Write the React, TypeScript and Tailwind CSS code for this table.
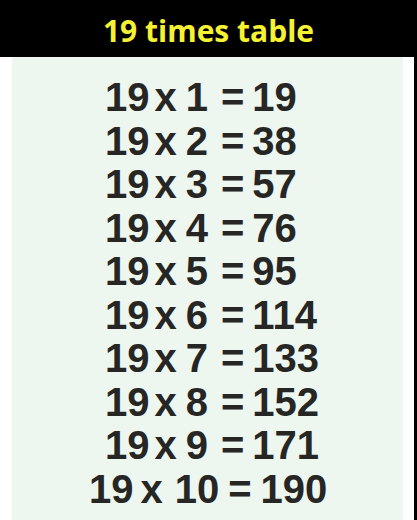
const rows = [1, 2, 3, 4, 5, 6, 7, 8, 9];

export default function App() {
    return (
        <div className="w-[417px] h-[520px] bg-black flex flex-col overflow-hidden">
            <div className="h-[57px] flex items-center justify-center shrink-0 pt-[5px]">
                <h1 className="text-[30px] font-bold text-[#f5f232] leading-none" style={{ fontFamily: '"Open Sans", sans-serif' }}>
                    19 times table
                </h1>
            </div>
            <div className="flex-1 bg-white pl-[12px] pr-[11px] mr-[3px]">
                <div
                    className="h-full bg-[#eef6f0] pt-[19px] text-[#262624] font-bold text-[40px] leading-[43.5px]"
                    style={{ fontFamily: '"Liberation Sans", Arial, sans-serif' }}
                >
                    {rows.map((n) => (
                        <div key={n} className="flex pl-[93px]">
                            <span>19</span>
                            <span className="ml-[5px]">x</span>
                            <span className="ml-[9px]">{n}</span>
                            <span className="ml-[13px]">=</span>
                            <span className="ml-[8px]">{19 * n}</span>
                        </div>
                    ))}
                    <div className="flex pl-[77px]">
                        <span>19</span>
                        <span className="ml-[7px]">x</span>
                        <span className="ml-[12px]">10</span>
                        <span className="ml-[9px]">=</span>
                        <span className="ml-[9px]">190</span>
                    </div>
                </div>
            </div>
        </div>
    );
}
